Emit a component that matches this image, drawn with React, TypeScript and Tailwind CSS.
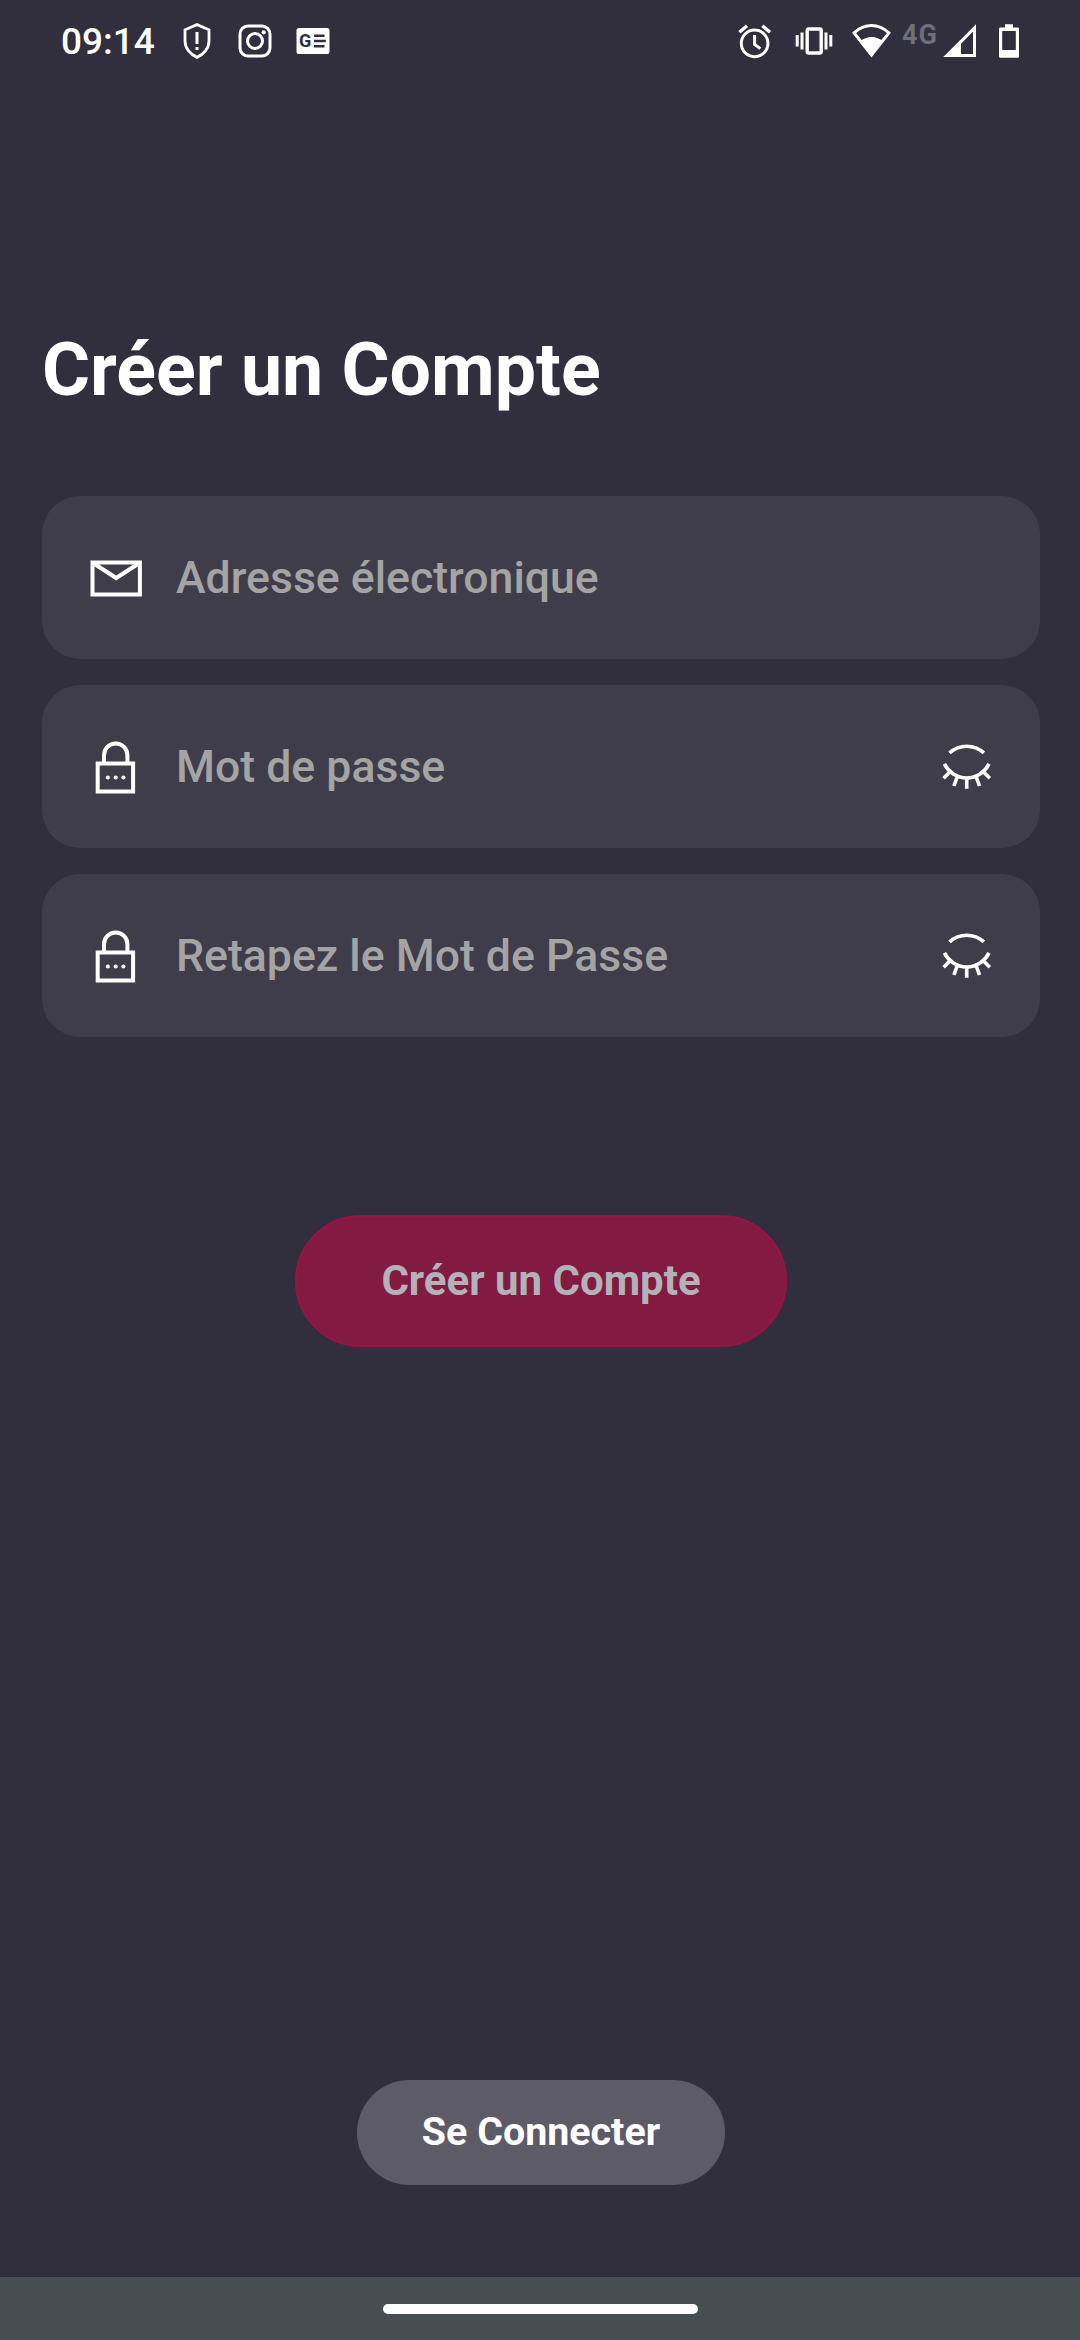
import React from "react";

const ShieldIcon = () => (
  <svg width="28" height="40" viewBox="0 0 28 40" fill="none">
    <path
      d="M14 4.6 L26 9.8 V21 C26 28.5 20.5 34.5 14 37.4 C7.5 34.5 2 28.5 2 21 V9.8 Z"
      stroke="white"
      strokeWidth="2.8"
    />
    <path d="M14 12 V24" stroke="white" strokeWidth="3" />
    <path d="M14 27 V30" stroke="white" strokeWidth="3" />
  </svg>
);

const InstagramIcon = () => (
  <svg width="34" height="40" viewBox="0 0 34 40" fill="none">
    <rect x="2" y="6" width="30" height="30" rx="8" stroke="white" strokeWidth="3" />
    <circle cx="17" cy="21" r="7.5" stroke="white" strokeWidth="3" />
    <circle cx="25.7" cy="12.3" r="2.1" fill="white" />
  </svg>
);

const NewsIcon = () => (
  <svg width="34" height="40" viewBox="0 0 34 40">
    <rect x="0.5" y="8" width="33" height="26" rx="2.6" fill="white" />
    <text
      x="3"
      y="27"
      fill="#312e3d"
      fontFamily="Roboto, sans-serif"
      fontSize="18"
      fontWeight="700"
    >
      G
    </text>
    <path
      d="M18 15.7 H28.5 M18 21 H29.8 M18 26.2 H28.5"
      stroke="#312e3d"
      strokeWidth="2.4"
    />
  </svg>
);

const AlarmIcon = () => (
  <svg width="34" height="40" viewBox="0 0 34 40" fill="none" stroke="white">
    <circle cx="16.6" cy="23.4" r="13.3" strokeWidth="3" />
    <path d="M16.6 15 V24.4 L22.4 28.6" strokeWidth="3" />
    <path d="M1.4 12.2 L9 5.8 M24.4 5.8 L32 12.2" strokeWidth="3.4" />
  </svg>
);

const VibrateIcon = () => (
  <svg width="38" height="40" viewBox="0 0 38 40" fill="none" stroke="white">
    <rect x="12.2" y="9" width="14" height="24" rx="1.6" strokeWidth="3.4" />
    <path
      d="M2.2 15 V26.5 M7 12.5 V29.5 M31 12.5 V29.5 M35.8 15 V26.5"
      strokeWidth="3"
    />
  </svg>
);

const WifiIcon = () => (
  <svg width="40" height="40" viewBox="0 0 40 40">
    <path
      d="M20.5 35 L3.1 12.9 Q11 5.6 20.5 5.6 Q30 5.6 37.9 12.9 Z"
      fill="none"
      stroke="white"
      strokeWidth="3"
    />
    <path d="M20.5 36.5 L9 21.5 Q14 17 20.5 17 Q27 17 32 21.5 Z" fill="white" />
  </svg>
);

const SignalIcon = () => (
  <svg width="34" height="40" viewBox="0 0 34 40">
    <path
      fillRule="evenodd"
      fill="white"
      d="M34 4.2 V37 H1.2 Z M31 11.5 L19 23.8 V34 H31 Z"
    />
  </svg>
);

const BatteryIcon = () => (
  <svg width="20" height="40" viewBox="0 0 20 40">
    <path
      fillRule="evenodd"
      fill="white"
      d="M6 4.3 H14 V7.6 H18.6 Q20 7.6 20 9 V36.4 Q20 37.8 18.6 37.8 H1.4 Q0 37.8 0 36.4 V9 Q0 7.6 1.4 7.6 H6 Z M3.2 11 V30 H16.8 V11 Z"
    />
  </svg>
);

const MailIcon = () => (
  <svg width="52" height="56" viewBox="0 0 52 56" fill="none" stroke="white">
    <rect x="2.5" y="12.5" width="47.4" height="32" strokeWidth="4" />
    <path d="M3 13 L26.2 28 L49.4 13" strokeWidth="4" />
  </svg>
);

const LockIcon = () => (
  <svg width="52" height="56" viewBox="0 0 52 56" fill="none" stroke="white">
    <rect x="7.7" y="24.5" width="35.4" height="28" strokeWidth="4" />
    <path d="M14 24 V16.2 A11.7 11.7 0 0 1 37.4 16.2 V24" strokeWidth="4" />
    <g fill="white" stroke="none">
      <circle cx="17.8" cy="38.5" r="2.1" />
      <circle cx="25.7" cy="38.5" r="2.1" />
      <circle cx="33.4" cy="38.5" r="2.1" />
    </g>
  </svg>
);

const ClosedEyeIcon = () => (
  <svg width="50" height="56" viewBox="0 0 50 56" fill="none" stroke="white" strokeWidth="3.6">
    <path d="M7.5 13.9 Q15 7.2 24.7 7.2 Q34.4 7.2 41.9 13.9" />
    <path d="M2.4 24.9 C6.5 33.2 14.7 39 24.7 39 C34.7 39 42.9 33.2 47 24.9" />
    <path d="M24.7 39 V49.8 M15.4 37.4 L11.9 47 M34 37.4 L37.5 47 M8.6 32.2 L1.6 39.2 M40.8 32.2 L47.8 39.2" />
  </svg>
);

const StatusBar = () => (
  <div className="flex h-20 items-start justify-between pt-5 pl-[61px] pr-[61px]">
    <div className="flex h-10 items-center">
      <span className="w-[122px] pt-1 text-[37px] leading-10 font-medium">
        09:14
      </span>
      <ShieldIcon />
      <div className="ml-[27px] flex gap-[24px]">
        <InstagramIcon />
        <NewsIcon />
      </div>
    </div>
    <div className="flex h-10">
      <AlarmIcon />
      <div className="ml-[23px]">
        <VibrateIcon />
      </div>
      <div className="ml-[18px]">
        <WifiIcon />
      </div>
      <span className="ml-[11px] w-[40px] text-[27px] leading-[30px] font-bold tracking-[1px] text-[#706e78]">
        4G
      </span>
      <SignalIcon />
      <div className="ml-[23px]">
        <BatteryIcon />
      </div>
    </div>
  </div>
);

const fields = [
  { id: "email", label: "Adresse électronique", password: false },
  { id: "password", label: "Mot de passe", password: true },
  { id: "confirm", label: "Retapez le Mot de Passe", password: true },
];

const App = () => {
  return (
    <div className="flex h-[2340px] w-[1080px] flex-col bg-[#312e3d] font-[Roboto,sans-serif] text-white">
      <StatusBar />

      <main className="flex flex-1 flex-col items-center pt-[240px] pr-10 pb-[92px] pl-[42px]">
        <h1 className="self-start text-[73.5px] leading-[100px] font-bold whitespace-nowrap">
          Créer un Compte
        </h1>

        <div className="mt-[76px] flex w-full flex-col gap-[26px]">
          {fields.map(({ id, label, password }) => (
            <div
              key={id}
              className="flex h-[163px] items-center rounded-[38px] bg-[#403d4b] pr-12 pl-12"
            >
              {password ? <LockIcon /> : <MailIcon />}
              <span className="ml-[34px] flex-1 pt-0.5 text-[44.6px] font-medium whitespace-nowrap text-[#a4a4a4]">
                {label}
              </span>
              {password && <ClosedEyeIcon />}
            </div>
          ))}
        </div>

        <button className="mt-[178px] h-[132px] w-[492px] rounded-full border-2 border-[#971445] bg-[#821a41] pb-0.5 text-[42px] font-bold text-[#b4b2b9]">
          Créer un Compte
        </button>

        <button className="mt-auto h-[105px] w-[368px] rounded-full bg-[#5e5b69] pb-0.5 text-[39.4px] font-bold">
          Se Connecter
        </button>
      </main>

      <div className="flex h-[63px] justify-center bg-[#464e52] pt-[27px]">
        <div className="h-[10px] w-[315px] rounded-full bg-white" />
      </div>
    </div>
  );
};

export default App;
